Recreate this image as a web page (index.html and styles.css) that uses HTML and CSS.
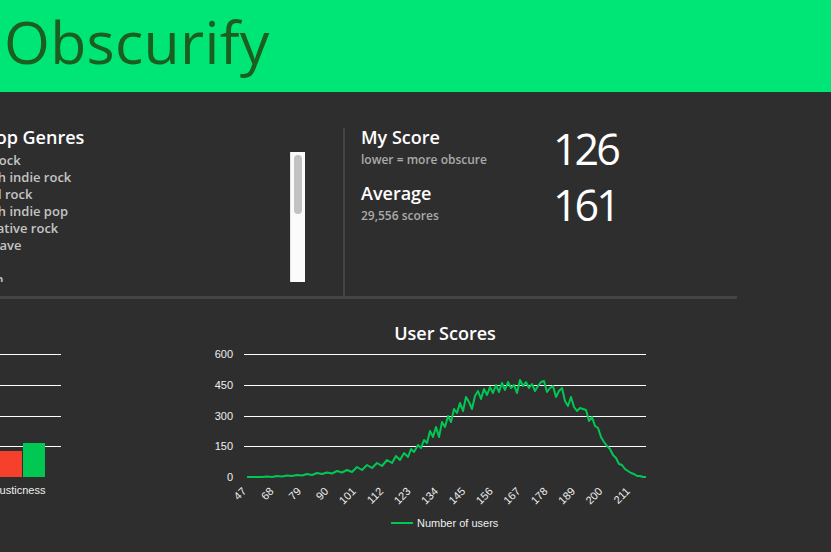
FILE: index.html
```html
<!DOCTYPE html>
<html>

<head>
	<meta charset="utf-8">
	<title>Obscurify</title>
	<link rel="stylesheet" href="styles.css">
</head>

<body>
	<header class="top-bar">
		<h1 class="logo">Obscurify</h1>
	</header>

	<main class="dash">
		<section class="summary">
			<div class="genres">
				<h2 class="panel-title">Your Top Genres</h2>
				<div class="genre-box">
					<ul class="genre-list">
						<li>modern rock</li>
						<li>new welsh indie rock</li>
						<li>heartland rock</li>
						<li>new welsh indie pop</li>
						<li>uk alternative rock</li>
						<li>uk new wave</li>
						<li>emo</li>
						<li>australian</li>
						<li>indie pop</li>
					</ul>
					<div class="fake-scroll">
						<div class="fake-thumb"></div>
					</div>
				</div>
			</div>

			<div class="scores">
				<div class="score-row">
					<div class="score-label">
						<h2 class="panel-title">My Score</h2>
						<p class="score-note">lower = more obscure</p>
					</div>
					<div class="score-num">126</div>
				</div>
				<div class="score-row">
					<div class="score-label">
						<h2 class="panel-title">Average</h2>
						<p class="score-note">29,556 scores</p>
					</div>
					<div class="score-num">161</div>
				</div>
			</div>
		</section>

		<section class="charts">
			<div class="chart-audio">
				<svg width="150" height="190" viewBox="-80 345 150 190">
					<g class="grid">
						<line x1="-80" y1="354.5" x2="61" y2="354.5" />
						<line x1="-80" y1="385.5" x2="61" y2="385.5" />
						<line x1="-80" y1="416.5" x2="61" y2="416.5" />
						<line x1="-80" y1="446.5" x2="61" y2="446.5" />
					</g>
					<rect class="bar-me" x="0" y="451" width="22" height="26" />
					<rect class="bar-avg" x="23" y="443" width="22" height="34" />
					<text class="axis" x="13" y="494" text-anchor="middle">Acousticness</text>
				</svg>
			</div>

			<div class="chart-users">
				<h3 class="chart-title">User Scores</h3>
				<svg width="490" height="190" viewBox="200 345 490 190">
					<g class="grid">
						<line x1="244" y1="354.5" x2="646" y2="354.5" />
						<line x1="244" y1="385.5" x2="646" y2="385.5" />
						<line x1="244" y1="416.5" x2="646" y2="416.5" />
						<line x1="244" y1="446.5" x2="646" y2="446.5" />
					</g>
					<g class="axis" text-anchor="end">
						<text x="233" y="358">600</text>
						<text x="233" y="389">450</text>
						<text x="233" y="420">300</text>
						<text x="233" y="450">150</text>
						<text x="233" y="481">0</text>
					</g>
					<g class="axis" text-anchor="end">
						<text x="247" y="492" transform="rotate(-45 247 492)">47</text>
						<text x="274.4" y="492" transform="rotate(-45 274.4 492)">68</text>
						<text x="301.8" y="492" transform="rotate(-45 301.8 492)">79</text>
						<text x="329.2" y="492" transform="rotate(-45 329.2 492)">90</text>
						<text x="356.6" y="492" transform="rotate(-45 356.6 492)">101</text>
						<text x="384" y="492" transform="rotate(-45 384 492)">112</text>
						<text x="411.4" y="492" transform="rotate(-45 411.4 492)">123</text>
						<text x="438.8" y="492" transform="rotate(-45 438.8 492)">134</text>
						<text x="466.2" y="492" transform="rotate(-45 466.2 492)">145</text>
						<text x="493.6" y="492" transform="rotate(-45 493.6 492)">156</text>
						<text x="521" y="492" transform="rotate(-45 521 492)">167</text>
						<text x="548.4" y="492" transform="rotate(-45 548.4 492)">178</text>
						<text x="575.8" y="492" transform="rotate(-45 575.8 492)">189</text>
						<text x="603.2" y="492" transform="rotate(-45 603.2 492)">200</text>
						<text x="630.6" y="492" transform="rotate(-45 630.6 492)">211</text>
					</g>
					<polyline class="users-line" points="247,477 252,477 257,477 262,477 267,476.5 272,477 277,476 282,476.5 287,475.5 292,476 297,475 302,475.5 307,474 312,475 317,473 322,474 327,472.5 332,473.5 337,471 342,472.5 347,470 352,472 357,467 362,470 367,465 372,468 377,463 382,466 387,460 392,463 396,456 400,460 404,453 408,457 411,449 414,452 418,445 421,448 424,440 427,443 430,431 433,437 436,427 439,437 442,422 445,427 448,416 451,422 454,409 457,413 460,403 463,411 466,397 469,402 472,409 475,396 478,391 481,399 484,389 487,395 490,387 493,393 496,385 499,392 502,383 505,390 508,382 511,388 514,385 517,393 520,380 523,386 526,382 529,388 532,384 535,391 538,386 541,382 544,381 547,392 550,388 553,386 556,397 559,391 562,388 565,401 568,406 571,397 574,407 577,411 580,408 583,409 586,410 589,421 592,417 595,426 598,428 601,437 604,442 607,446 610,449 613,455 616,458 619,464 622,465 625,469 628,471 631,473 634,474 637,476 640,476 643,477 646,477" />
					<line class="legend-line" x1="391" y1="523" x2="413" y2="523" />
					<text class="axis" x="417" y="527">Number of users</text>
				</svg>
			</div>
		</section>
	</main>
</body>

</html>
```

FILE: styles.css
```css
* {
	margin: 0;
	padding: 0;
	box-sizing: border-box;
}

ul {
	list-style: none;
}

body {
	background: #2f2e2f;
	color: #fff;
	font-family: "Open Sans", "Noto Sans", sans-serif;
	overflow: hidden;
}

/* 顶部绿色条 */
.top-bar {
	height: 93px;
	background: #00e676;
	border-bottom: 1px solid #26382b;
	padding-left: 4px;
}

.logo {
	font-size: 59px;
	font-weight: 400;
	line-height: 82px;
	letter-spacing: 0.3px;
	color: #1b5e20;
}

.dash {
	width: 817px;
	margin-left: -80px;
}

.summary {
	display: flex;
	height: 171px;
	margin-top: 35px;
	border-bottom: 3px solid #454445;
}

.genres {
	width: 425px;
	padding: 0 38px 0 20px;
	border-right: 2px solid #454445;
}

.panel-title {
	font-size: 18px;
	font-weight: 600;
	line-height: 18px;
}

.genre-box {
	display: flex;
	height: 130px;
	margin-top: 6px;
}

.genre-list {
	flex: 1;
	overflow: hidden;
	font-size: 13px;
	line-height: 17px;
	color: #c4c4c4;
	font-weight: 600;
}

.fake-scroll {
	width: 15px;
	height: 130px;
	padding-top: 3px;
	background: #fbfbfb;
	border-left: 1px solid #e4e4e4;
}

.fake-thumb {
	width: 8px;
	height: 59px;
	margin: 0 auto;
	background: #c2c2c2;
	border-radius: 4px;
}

.scores {
	flex: 1;
	padding-left: 16px;
}

.score-row {
	display: flex;
	height: 56px;
}

.score-label {
	width: 192px;
}

.score-note {
	margin-top: 6px;
	font-size: 12px;
	line-height: 16px;
	color: #aaa;
	font-weight: 600;
}

.score-num {
	margin-top: -1px;
	font-size: 43px;
	font-weight: 500;
	line-height: 44px;
	letter-spacing: -3px;
}

/* 图表 */
.charts {
	display: flex;
}

.chart-audio {
	margin-top: 46px;
}

.chart-audio svg,
.chart-users svg {
	display: block;
}

.chart-users {
	width: 490px;
	margin-left: 130px;
	padding-top: 23px;
}

.chart-title {
	font-size: 18px;
	font-weight: 600;
	line-height: 22px;
	text-align: center;
	margin-bottom: 1px;
}

.grid line {
	stroke: #fff;
	stroke-width: 1;
}

.axis {
	font-family: "Liberation Sans", Arial, sans-serif;
	font-size: 11px;
	fill: #eee;
}

.bar-me {
	fill: #f4402c;
}

.bar-avg {
	fill: #00c853;
}

.users-line,
.legend-line {
	fill: none;
	stroke: #00c853;
	stroke-width: 2;
	stroke-linejoin: round;
}
```
